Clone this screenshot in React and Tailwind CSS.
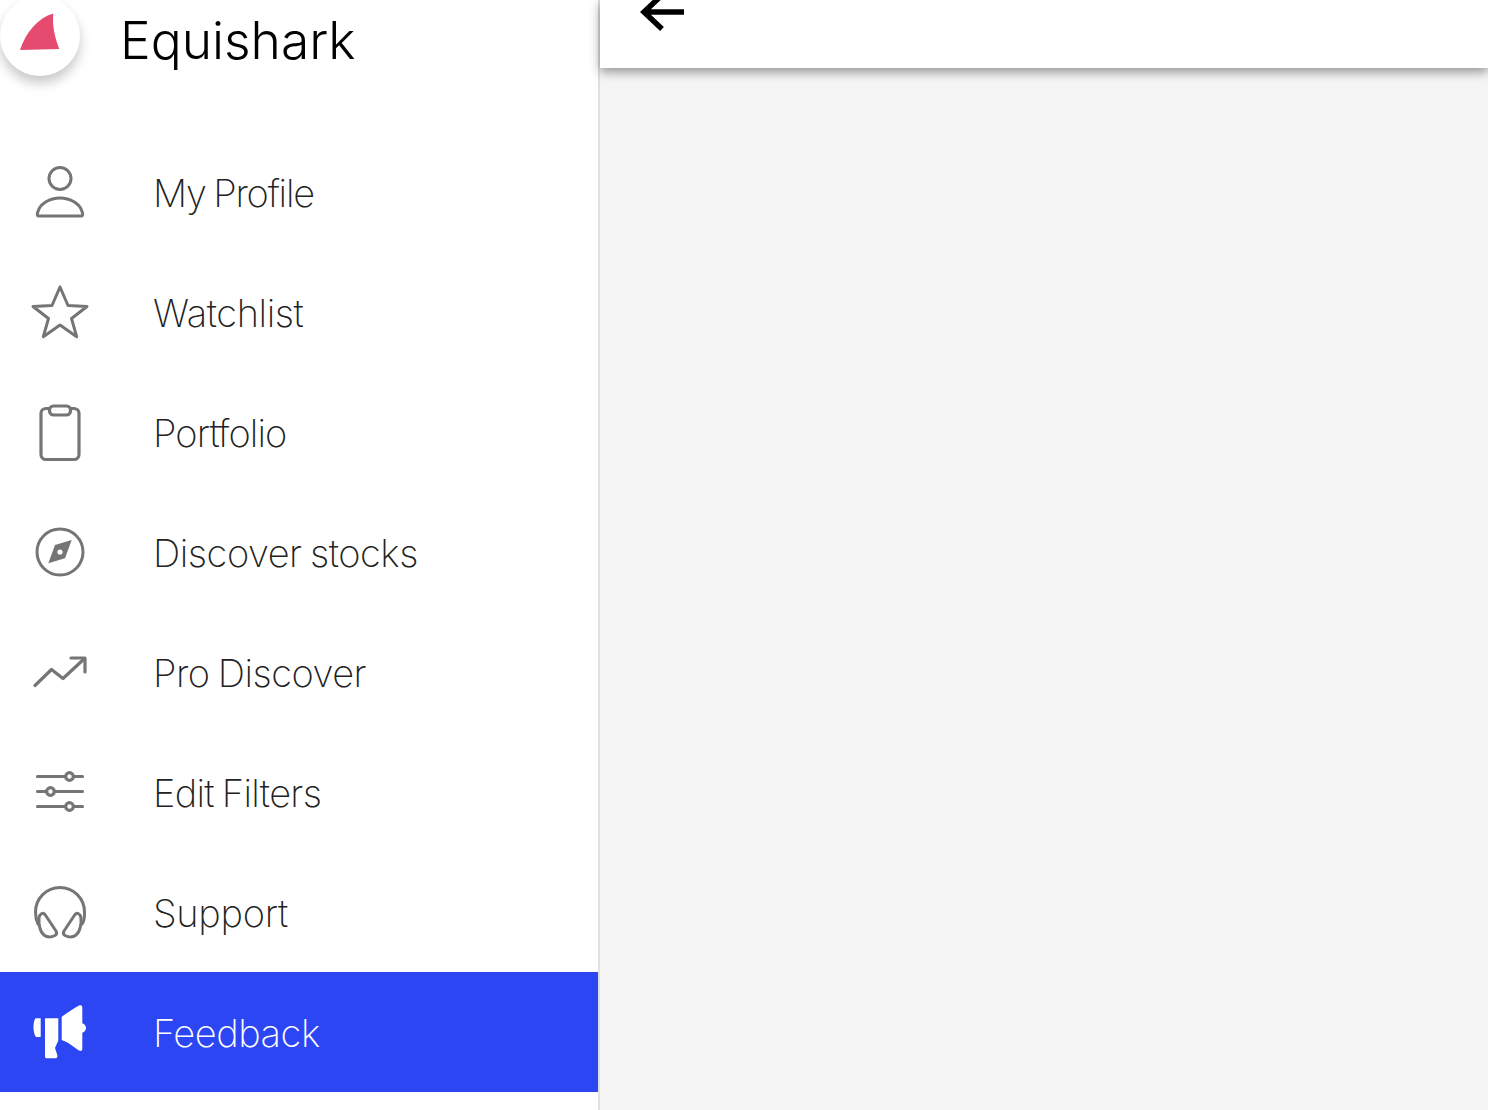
import React from 'react';

const stroke = { fill: 'none', stroke: '#757575', strokeWidth: 3, strokeLinecap: 'round', strokeLinejoin: 'round' };

const Icon = ({ children }) => (
  <svg width="60" height="60" viewBox="0 0 60 60" className="shrink-0">
    {children}
  </svg>
);

const ProfileIcon = () => (
  <Icon>
    <g {...stroke}>
      <circle cx="30" cy="16.5" r="11" />
      <path d="M8.5 54C7 54 7 51.500 8 49.500 10 41.500 20 36 30 36s20 5.500 22 13.500c1 2 1 4.500-.5 4.500Z" />
    </g>
  </Icon>
);

const StarIcon = () => (
  <Icon>
    <path
      {...stroke}
      d="M30 5 38 23.5 57 24.500 41.500 36.500 46.700 54.700 30 43 13.300 54.700 18.500 36.500 3 24.500 22 23.500Z"
    />
  </Icon>
);

const PortfolioIcon = () => (
  <Icon>
    <g {...stroke} strokeWidth="3.2">
      <rect x="11" y="6.500" width="38" height="51" rx="5" />
      <rect x="19.500" y="4" width="21" height="9" rx="4" fill="#fff" />
    </g>
  </Icon>
);

const CompassIcon = () => (
  <Icon>
    <circle {...stroke} cx="30" cy="30" r="23" />
    <path fill="#757575" d="M41.700 18 35 36.300 18.300 41.300 25 23Z" />
    <circle cx="30" cy="30" r="2.600" fill="#fff" />
  </Icon>
);

const TrendIcon = () => (
  <Icon>
    <g {...stroke} strokeWidth="3.2">
      <path d="M5 43.500 21.500 27.500 33 36.500 54 17" />
      <path d="M41 16H55V30" />
    </g>
  </Icon>
);

const SlidersIcon = () => (
  <Icon>
    <g {...stroke} strokeWidth="3.2">
      <path d="M7.500 14.500H52.500M7.500 29.500H52.500M7.500 44.500H52.500" />
      <circle cx="39.500" cy="14.500" r="3.800" fill="#fff" />
      <circle cx="20.500" cy="29.500" r="3.800" fill="#fff" />
      <circle cx="39.500" cy="44.500" r="3.800" fill="#fff" />
    </g>
  </Icon>
);

const HeadphonesIcon = () => (
  <Icon>
    <g {...stroke}>
      <path d="M8 42C6 38 5.500 34 5.500 30a24.500 24.500 0 0 1 49 0c0 4 .5 8-2.500 12" />
      <path d="M9 36C9.500 32 13 30 15 32.500L26 49C27.500 51.500 26.500 52.500 25 53.500 21 55.500 17 55.500 14 53 10 50 8.500 42 9 36Z" />
      <path d="M51 36C50.500 32 47 30 45 32.500L34 49C32.500 51.500 33.500 52.500 35 53.500 39 55.500 43 55.500 46 53 50 50 51.500 42 51 36Z" />
    </g>
  </Icon>
);

const FeedbackIcon = () => (
  <Icon>
    <g fill="#fff">
      <path d="M5.500 16.300H10.700V35H6C3 32 2.500 20 5.500 16.300Z" />
      <path d="M15 16.300H28.300V38.500L25 46 27.300 53C27.800 55.500 27 56.300 25 56.300H17C15.500 56.300 15 55.500 15 54Z" />
      <path d="M31.700 14.700C38 10 44 6.500 49 3.500 51 2.700 52.300 3.500 52.300 5.500V21C53 22 56 22.500 56 26 56 29.500 53 30 52.300 31V47C52.300 49 50.500 49.500 49 48.500 44 45 38 40 31.700 38Z" />
    </g>
  </Icon>
);

const items = [
  { label: 'My Profile', Glyph: ProfileIcon, tracking: 'tracking-[-1.2px]' },
  { label: 'Watchlist', Glyph: StarIcon, tracking: 'tracking-[-0.4px]' },
  { label: 'Portfolio', Glyph: PortfolioIcon, tracking: 'tracking-[-0.9px]' },
  { label: 'Discover stocks', Glyph: CompassIcon, tracking: 'tracking-[-0.45px]' },
  { label: 'Pro Discover', Glyph: TrendIcon, tracking: 'tracking-[-0.5px]' },
  { label: 'Edit Filters', Glyph: SlidersIcon, tracking: 'tracking-[-0.7px]' },
  { label: 'Support', Glyph: HeadphonesIcon, tracking: 'tracking-[-0.3px]' },
  { label: 'Feedback', Glyph: FeedbackIcon, tracking: 'tracking-[-0.45px]', active: true },
];

export default function App() {
  return (
    <div className="flex h-[1110px] overflow-hidden bg-white font-['Inter',sans-serif]">
      <aside className="w-[600px] shrink-0 border-r-2 border-[#e0e0e0] bg-white">
        <div className="flex h-[132px] items-start">
          <div className="-mt-1 flex h-20 w-20 shrink-0 rounded-full bg-white shadow-[0_7px_12px_rgba(0,0,0,0.22)]">
            <svg width="80" height="80" viewBox="0 0 80 80">
              <path fill="#e54b6e" d="M53.300 17.500C38 22 26 36 20 54L59.300 53C55 42 52 30 53.300 17.500Z" />
            </svg>
          </div>
          <span className="ml-10 mt-[6px] text-[51.5px] leading-[68px] font-light text-black">Equishark</span>
        </div>
        <nav>
          {items.map(({ label, Glyph, tracking, active }) => (
            <div
              key={label}
              className={`flex h-[120px] items-center gap-[63px] pl-[30px] ${active ? 'bg-[#2c46f4] text-white' : 'text-[#222]'}`}
            >
              <Glyph />
              <span className={`pt-[2px] text-[38px] font-extralight [word-spacing:-2px] ${tracking}`}>{label}</span>
            </div>
          ))}
        </nav>
      </aside>
      <main className="min-w-0 flex-1 bg-[#f5f5f5]">
        <header className="flex h-[68px] items-start bg-white pl-[38px] shadow-[0_4px_10px_rgba(0,0,0,0.4)]">
          <svg width="50" height="40" viewBox="0 0 50 40" className="-mt-[8px] overflow-visible">
            <path
              d="M46 20H8M24 3 6 20 24 37"
              fill="none"
              stroke="#000"
              strokeWidth="5.500"
            />
          </svg>
        </header>
      </main>
    </div>
  );
}
